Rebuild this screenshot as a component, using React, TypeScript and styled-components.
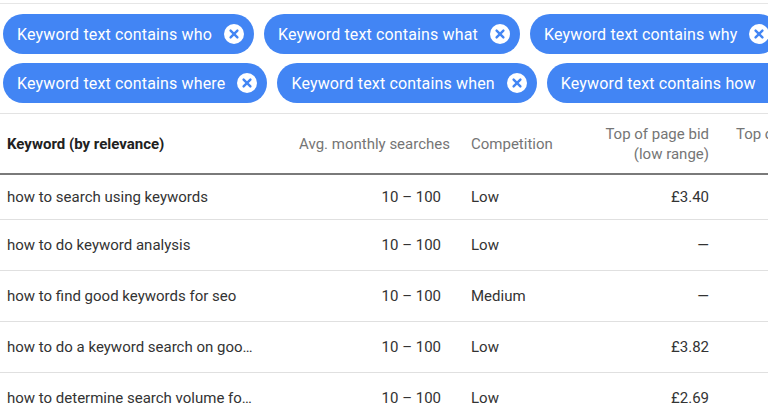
import * as React from "react";
import styled, { createGlobalStyle } from "styled-components";

const GlobalStyle = createGlobalStyle`
  html, body {
    margin: 0;
    padding: 0;
    background: #fff;
    overflow: hidden;
  }
  body {
    font-family: Roboto, "Liberation Sans", Arial, sans-serif;
  }
`;

type Row = {
  keyword: string;
  searches: string;
  competition: string;
  bid: string;
};

const chipRows: string[][] = [
  ["who", "what", "why"],
  ["where", "when", "how"],
];

const rows: Row[] = [
  { keyword: "how to search using keywords", searches: "10 – 100", competition: "Low", bid: "£3.40" },
  { keyword: "how to do keyword analysis", searches: "10 – 100", competition: "Low", bid: "—" },
  { keyword: "how to find good keywords for seo", searches: "10 – 100", competition: "Medium", bid: "—" },
  { keyword: "how to do a keyword search on google", searches: "10 – 100", competition: "Low", bid: "£3.82" },
  { keyword: "how to determine search volume for keywords", searches: "10 – 100", competition: "Low", bid: "£2.69" },
];

const CloseIcon = () => (
  <svg width="20" height="20" viewBox="0 0 20 20">
    <circle cx="10" cy="10" r="10" fill="#fff" />
    <path d="M6.6 6.6 L13.4 13.4 M13.4 6.6 L6.6 13.4" stroke="#4285f4" strokeWidth="2.4" strokeLinecap="round" />
  </svg>
);

const App = () => {
  return (
    <SPage>
      <GlobalStyle />
      <SFilters>
        {chipRows.map((words, i) => (
          <SChipRow key={i}>
            {words.map((w) => (
              <SChip key={w}>
                <SChipLabel>Keyword text contains {w}</SChipLabel>
                <CloseIcon />
              </SChip>
            ))}
          </SChipRow>
        ))}
      </SFilters>
      <STable>
        <SHeader>
          <SHeadCell $bold>Keyword (by relevance)</SHeadCell>
          <SHeadCell $align="right">Avg. monthly searches</SHeadCell>
          <SHeadCell $pad={21}>Competition</SHeadCell>
          <SHeadCell $align="right">
            Top of page bid
            <br />
            (low range)
          </SHeadCell>
          <SHeadCell $align="right">
            Top of page bid (high
            <br />
            range)
          </SHeadCell>
        </SHeader>
        {rows.map((r, i) => (
          <SRow key={r.keyword} $height={i === 0 ? 44 : 50}>
            <SCell $pad={7}>
              <SEllipsis>{r.keyword}</SEllipsis>
            </SCell>
            <SCell $align="right" $padRight={9}>
              {r.searches}
            </SCell>
            <SCell $pad={21}>{r.competition}</SCell>
            <SCell $align="right">{r.bid}</SCell>
            <SCell />
          </SRow>
        ))}
      </STable>
    </SPage>
  );
};

export default App;

const SPage = styled.div`
  width: 768px;
  height: 420px;
  overflow: hidden;
  padding-top: 3px;
  box-sizing: border-box;
`;

const SFilters = styled.div`
  border-top: 1px solid #e6e6e6;
  border-bottom: 1px solid #e3e3e3;
  padding: 10px 0 10px 3px;
  display: flex;
  flex-direction: column;
  gap: 9px;
`;

const SChipRow = styled.div`
  display: flex;
  gap: 10px;
  white-space: nowrap;
`;

const SChip = styled.div`
  flex: none;
  display: flex;
  align-items: center;
  gap: 12px;
  height: 40px;
  box-sizing: border-box;
  padding: 0 10px 0 14px;
  border-radius: 20px;
  background: #4285f4;
  color: #fff;
  svg {
    flex: none;
  }
`;

const SChipLabel = styled.span`
  font-size: 16px;
  letter-spacing: 0.15px;
`;

const STable = styled.div`
  width: 900px;
  font-size: 15px;
`;

const columns = "287px 163px 140px 119px 168px";

const SHeader = styled.div`
  display: grid;
  grid-template-columns: ${columns};
  align-items: center;
  height: 59px;
  border-bottom: 2px solid #7a7a7a;
`;

const SHeadCell = styled.div<{ $bold?: boolean; $align?: string; $pad?: number }>`
  padding-left: ${(p) => (p.$bold ? 7 : p.$pad ?? 0)}px;
  text-align: ${(p) => p.$align ?? "left"};
  font-weight: ${(p) => (p.$bold ? 700 : 400)};
  color: ${(p) => (p.$bold ? "#212121" : "#757575")};
  line-height: 20px;
  white-space: nowrap;
`;

const SRow = styled.div<{ $height: number }>`
  display: grid;
  grid-template-columns: ${columns};
  align-items: center;
  height: ${(p) => p.$height}px;
  border-bottom: 1px solid #e0e0e0;
  color: #333;
`;

const SCell = styled.div<{ $align?: string; $pad?: number; $padRight?: number }>`
  padding-left: ${(p) => p.$pad ?? 0}px;
  padding-right: ${(p) => p.$padRight ?? 0}px;
  text-align: ${(p) => p.$align ?? "left"};
  white-space: nowrap;
  overflow: hidden;
`;

const SEllipsis = styled.div`
  width: 246px;
  overflow: hidden;
  text-overflow: ellipsis;
  white-space: nowrap;
`;
